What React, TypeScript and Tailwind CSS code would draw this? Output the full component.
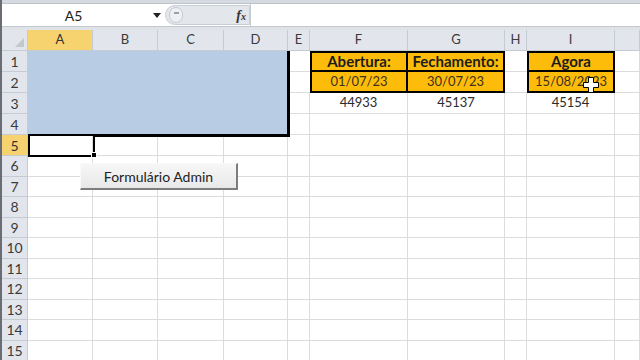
import React from 'react';

const COLS = ['A', 'B', 'C', 'D', 'E', 'F', 'G', 'H', 'I', 'J'];
const ROWS = Array.from({ length: 15 }, (_, i) => i + 1);

const VALUES: Record<string, string> = {
    F1: 'Abertura:',
    G1: 'Fechamento:',
    I1: 'Agora',
    F2: '01/07/23',
    G2: '30/07/23',
    I2: '15/08/2023',
    F3: '44933',
    G3: '45137',
    I3: '45154',
};

// every class string is written out so tailwind picks it up
const cellClass = (row: number, col: string) => {
    const inSel = row <= 4 && 'ABCD'.includes(col);
    if (inSel) return 'bg-[#b8cce4]';

    if (row === 1 && (col === 'F' || col === 'I'))
        return 'bg-[#fdbc0a] border-2 border-black font-bold text-[15px] text-[#1c1c1c]';
    if (row === 1 && col === 'G')
        return 'bg-[#fdbc0a] border-t-2 border-r-2 border-b-2 border-black font-bold text-[15px] text-[#1c1c1c]';
    if (row === 2 && (col === 'F' || col === 'I'))
        return 'bg-[#fdbc0a] border-l-2 border-r-2 border-b-2 border-black text-[#3b3220]';
    if (row === 2 && col === 'G')
        return 'bg-[#fdbc0a] border-r-2 border-b-2 border-black text-[#3b3220]';
    if (row <= 2 && (col === 'E' || col === 'H')) return 'border-b border-[#dadcdd]';

    return 'border-r border-b border-[#dadcdd] text-[#2b2b2b]';
};

const rowHeight = (row: number) => (row <= 5 ? 'h-[21px]' : 'h-[20.5px]');

const FatCross = () => (
    <svg width="16" height="16" viewBox="0 0 16 16" className="absolute left-[581px] top-[77px]">
        <path d="M5.5 0.5h5v5h5v5h-5v5h-5v-5h-5v-5h5z" fill="#fff" stroke="#000" strokeWidth="1" />
    </svg>
);

export default function App() {
    return (
        <div className="relative w-[640px] h-[360px] overflow-hidden bg-white border-l-2 border-[#6a6e74] font-['Lato','Noto_Sans',sans-serif] text-[13px]">
            {/* formula bar */}
            <div className="h-[4px] bg-[#d5dae0] border-b border-[#bcc2ca]" />
            <div className="h-[22px] flex items-stretch bg-white">
                <div className="w-[163px] relative flex items-center">
                    <span className="w-[143px] text-center text-[14px] text-[#222]">A5</span>
                    <svg width="8" height="5" viewBox="0 0 8 5" className="absolute left-[151px] top-[9px]">
                        <path d="M0 0h8L4 5z" fill="#222" />
                    </svg>
                </div>
                <div className="w-[85px] my-[1px] flex items-center justify-between bg-[#e3e6eb] border border-[#c9ced5] rounded-l-full">
                    <div className="ml-[3px] w-[14px] h-[16px] rounded-full bg-[#eef0f3] border border-[#c5cad1] flex items-start justify-center">
                        <div className="mt-[4px] w-[5px] h-[2px] bg-[#9aa1aa]" />
                    </div>
                    <span className="mr-[3px] italic font-bold font-['Liberation_Serif',serif] text-[14px] text-[#333]">
                        f<span className="text-[10px]">x</span>
                    </span>
                </div>
                <div className="flex-1 border-l border-[#c9ced5]" />
            </div>
            <div className="h-[4px] bg-[#dfe3e8] border-t border-[#c3c8cf]" />

            {/* sheet */}
            <div className="relative grid grid-cols-[26px_65px_65px_66px_64px_22px_98px_97px_22px_88px_1fr]">
                <div className="h-[21px] bg-[#e2e6ec] border-r border-b border-[#c5cbd3] relative">
                    <svg width="9" height="9" viewBox="0 0 9 9" className="absolute right-[3px] bottom-[3px]">
                        <path d="M9 0v9H0z" fill="#c3c8cf" />
                    </svg>
                </div>
                {COLS.map((c) => (
                    <div
                        key={c}
                        className={
                            c === 'A'
                                ? 'h-[21px] flex items-center justify-center bg-[#f6d36e] border-r border-b border-[#c5cbd3] text-[#333]'
                                : 'h-[21px] flex items-center justify-center bg-[#e2e6ec] border-r border-b border-[#c5cbd3] text-[#3a3a3a]'
                        }
                    >
                        {c === 'J' ? '' : c}
                    </div>
                ))}

                {ROWS.map((r) => (
                    <React.Fragment key={r}>
                        <div
                            className={`${rowHeight(r)} flex items-center justify-center border-r border-b border-[#c5cbd3] text-[14px] ${
                                r === 5 ? 'bg-[#f6d36e] text-[#333]' : 'bg-[#e2e6ec] text-[#3a3a3a]'
                            }`}
                        >
                            {r}
                        </div>
                        {COLS.map((c) => (
                            <div
                                key={c}
                                className={`${rowHeight(r)} flex items-center justify-center whitespace-nowrap ${cellClass(r, c)}`}
                            >
                                {VALUES[c + r] ?? ''}
                            </div>
                        ))}
                    </React.Fragment>
                ))}

                {/* selection outline A1:D4 and active cell A5 */}
                <div className="absolute left-[285px] top-[21px] w-[3px] h-[86px] bg-black" />
                <div className="absolute left-[91px] top-[104px] w-[197px] h-[3px] bg-black" />
                <div className="absolute left-[26px] top-[104px] w-[67px] h-[23px] border-2 border-black" />
                <div className="absolute left-[89px] top-[122px] w-[6px] h-[6px] bg-black border border-white" />
            </div>

            {/* form button on the sheet */}
            <button className="absolute left-[78px] top-[163px] w-[158px] h-[27px] flex items-center justify-center bg-gradient-to-b from-[#f7f7f7] to-[#e8e8e8] border-t border-l border-[#fafafa] border-r-2 border-b-2 border-r-[#7d7d7d] border-b-[#7d7d7d] text-[14px] text-[#222]">
                Formulário Admin
            </button>

            <FatCross />
        </div>
    );
}
